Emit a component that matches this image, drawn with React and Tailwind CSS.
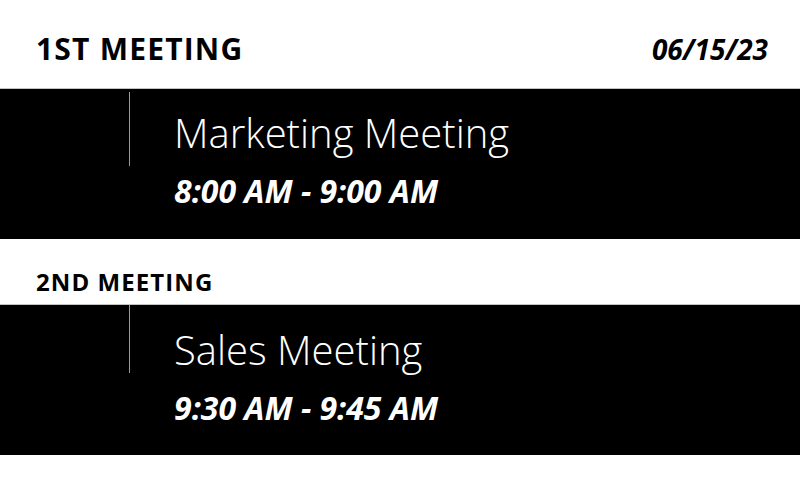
import React from "react"

const meetings = [
  {
    label: "1ST MEETING",
    title: "Marketing Meeting",
    time: "8:00 AM - 9:00 AM",
  },
  {
    label: "2ND MEETING",
    title: "Sales Meeting",
    time: "9:30 AM - 9:45 AM",
  },
]

function MeetingBand({ title, time, first }) {
  return (
    <section className="h-[151px] bg-black border-t border-[#c4c4c4] flex">
      <div className="w-[130px] flex justify-end">
        <div className={first ? "w-px h-[74px] mt-[3px] bg-[#9a9a9a]" : "w-px h-[68px] bg-[#9a9a9a]"} />
      </div>
      <div className={first ? "pl-[44px] pt-[20px] text-white" : "pl-[44px] pt-[21px] text-white"}>
        <h2 className="text-[40px] font-light leading-[48px]">{title}</h2>
        <p className="mt-[14px] text-[32px] font-bold italic leading-[40px]">{time}</p>
      </div>
    </section>
  )
}

export default function App() {
  return (
    <div className="w-[800px] h-[480px] bg-white text-black font-['Open_Sans',sans-serif]">
      <header className="h-[88px] flex items-center justify-between pt-[10px] pl-9 pr-8">
        <h1 className="text-[30px] font-bold tracking-[0.04em] leading-[40px]">{meetings[0].label}</h1>
        <span className="text-[28px] font-bold italic leading-[40px]">06/15/23</span>
      </header>
      <MeetingBand first title={meetings[0].title} time={meetings[0].time} />
      <div className="h-[65px] flex items-center pt-[20px] pl-9">
        <h1 className="text-[24px] font-bold tracking-[0.045em] leading-[32px]">{meetings[1].label}</h1>
      </div>
      <MeetingBand title={meetings[1].title} time={meetings[1].time} />
    </div>
  )
}
